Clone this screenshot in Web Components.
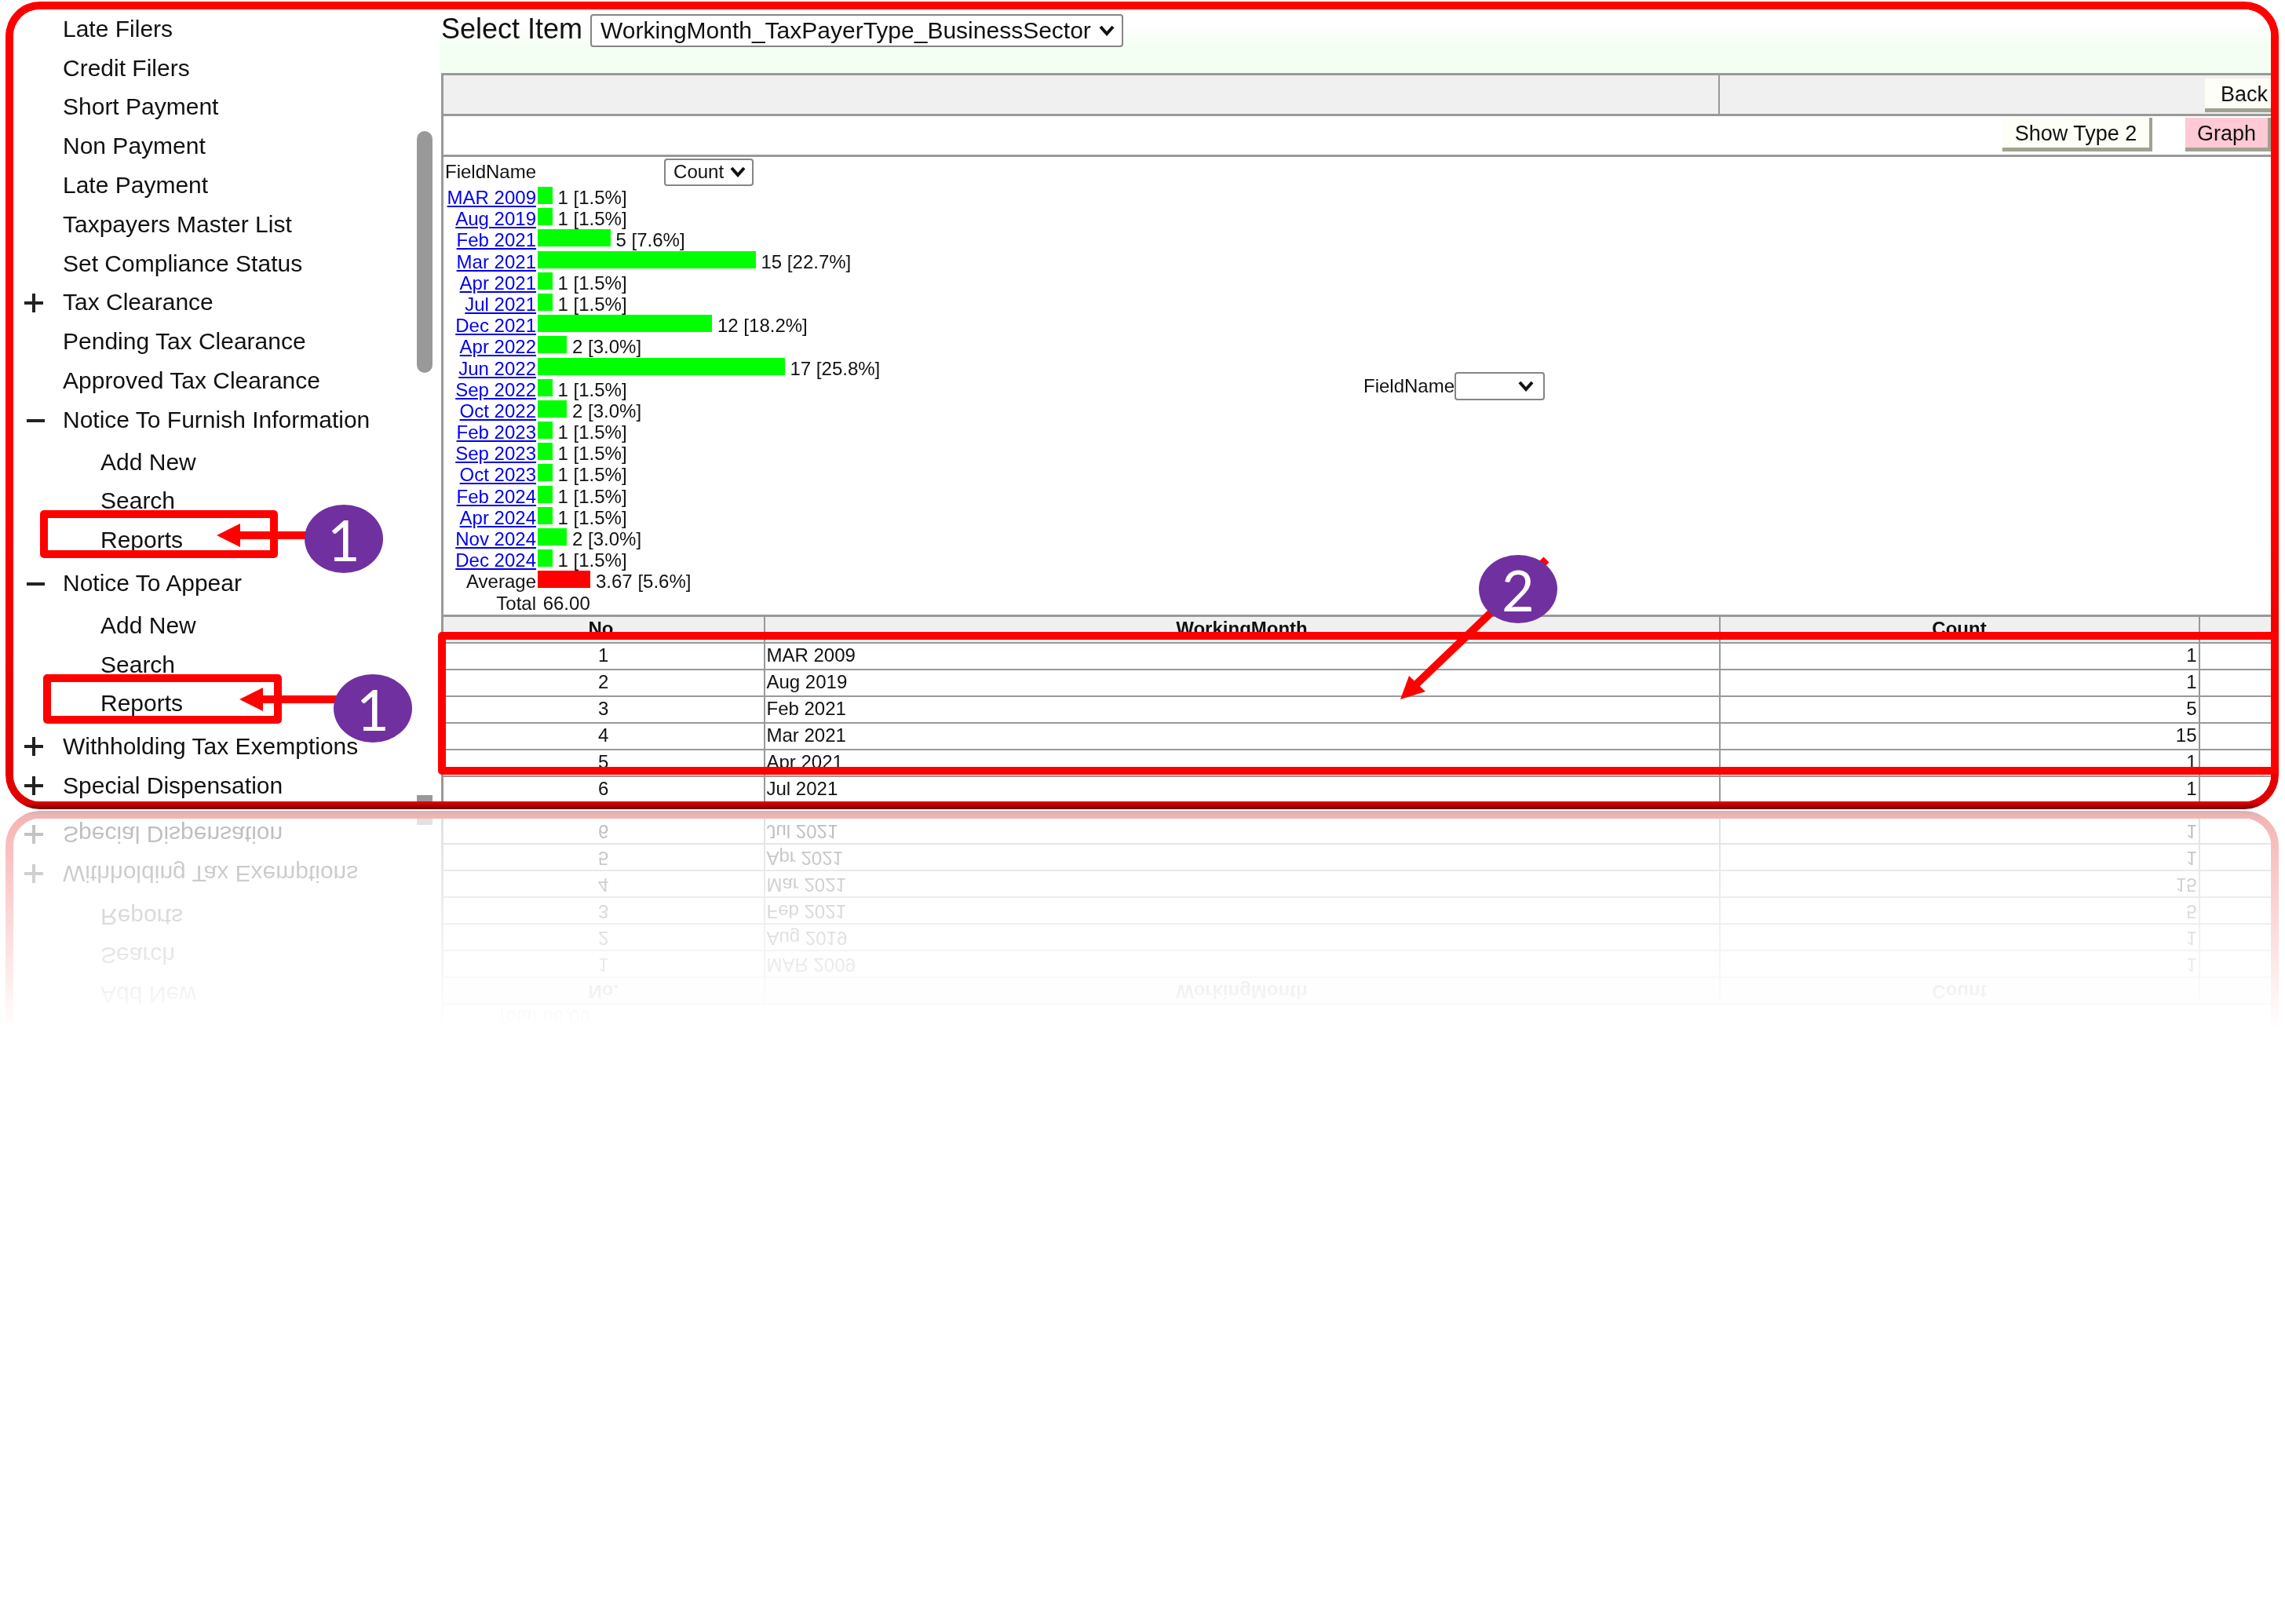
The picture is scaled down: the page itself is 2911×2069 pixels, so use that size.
<!DOCTYPE html>
<html>
<head>
<meta charset="utf-8">
<title>Compliance report</title>
<style>
html, body { margin: 0; background: #fff; }
body { font-family: "Liberation Sans", Arial, sans-serif; color: #111; }
#page { position: relative; width: 2911px; height: 2069px; overflow: hidden; padding-top: 2px; box-sizing: border-box; }
</style>
</head>
<body>
<div id="page">
  <screen-frame>
    <side-nav slot="nav">
      <nav-item>Late Filers</nav-item>
      <nav-item>Credit Filers</nav-item>
      <nav-item>Short Payment</nav-item>
      <nav-item>Non Payment</nav-item>
      <nav-item>Late Payment</nav-item>
      <nav-item>Taxpayers Master List</nav-item>
      <nav-item>Set Compliance Status</nav-item>
      <nav-item icon="plus">Tax Clearance</nav-item>
      <nav-item>Pending Tax Clearance</nav-item>
      <nav-item>Approved Tax Clearance</nav-item>
      <nav-item icon="minus">Notice To Furnish Information</nav-item>
      <nav-item sub first>Add New</nav-item>
      <nav-item sub>Search</nav-item>
      <nav-item sub last>Reports</nav-item>
      <nav-item icon="minus">Notice To Appear</nav-item>
      <nav-item sub first>Add New</nav-item>
      <nav-item sub>Search</nav-item>
      <nav-item sub last>Reports</nav-item>
      <nav-item icon="plus">Withholding Tax Exemptions</nav-item>
      <nav-item icon="plus">Special Dispensation</nav-item>
    </side-nav>
    <report-pane slot="main"></report-pane>
  </screen-frame>

  <call-box style="left:51px;top:650px;width:303px;height:61px"></call-box>
  <call-box style="left:55px;top:859px;width:304px;height:63px"></call-box>
  <call-box style="left:558px;top:805px;width:2345px;height:182px"></call-box>
  <call-arrows></call-arrows>
  <call-badge style="left:388px;top:643px">1</call-badge>
  <call-badge style="left:425px;top:859px">1</call-badge>
  <call-badge style="left:1884px;top:707px">2</call-badge>
</div>

<script>
const frameTemplate = document.createElement('template')
frameTemplate.innerHTML = `
<style>
:host {
  display: block;
  box-sizing: border-box;
  width: 2896px;
  height: 1029px;
  margin-left: 7px;
  border: 10px solid transparent;
  border-radius: 44px;
  background: linear-gradient(#fff, #fff) padding-box,
              linear-gradient(#ff0000 0, #ff0000 60%, #e60000 97%, #dc0000 99.2%, #700000 100%) border-box;
  -webkit-box-reflect: below 2px linear-gradient(transparent 73%, rgba(255,255,255,.3) 100%);
}
#screen {
  display: flex;
  height: 100%;
  border-radius: 34px;
  overflow: hidden;
  box-shadow: inset 0 -3px 4px rgba(0,0,0,.18);
  filter: blur(.45px);
}
</style>
<div id="screen">
  <slot name="nav"></slot>
  <slot name="main"></slot>
</div>`

class ScreenFrame extends HTMLElement {
  constructor () {
    super()
    this.attachShadow({ mode: 'open' })
    this.shadowRoot.appendChild(frameTemplate.content.cloneNode(true))
  }
}
customElements.define('screen-frame', ScreenFrame)

const navTemplate = document.createElement('template')
navTemplate.innerHTML = `
<style>
:host {
  display: flex;
  flex: 0 0 543px;
  width: 543px;
  height: 100%;
  overflow: hidden;
  background: #fff;
}
#items { flex: 0 0 514px; }
#track { display: flex; flex-direction: column; width: 20px; }
#thumb { width: 20px; height: 308px; margin-top: 155px; border-radius: 10px; background: #999; }
#end { width: 20px; height: 8px; margin-top: auto; background: #999; }
</style>
<div id="items"><slot></slot></div>
<div id="track"><div id="thumb"></div><div id="end"></div></div>`

class SideNav extends HTMLElement {
  constructor () {
    super()
    this.attachShadow({ mode: 'open' })
    this.shadowRoot.appendChild(navTemplate.content.cloneNode(true))
  }
}
customElements.define('side-nav', SideNav)

const itemTemplate = document.createElement('template')
itemTemplate.innerHTML = `
<style>
:host {
  display: flex;
  align-items: center;
  height: 49.8px;
  padding-left: 63px;
  font-size: 30px;
  white-space: nowrap;
  position: relative;
}
:host([sub]) { padding-left: 111px; }
:host([first]) { margin-top: 4px; }
:host([last]) { margin-bottom: 5px; }
svg { position: absolute; left: 13px; top: 12px; width: 28px; height: 26px; }
</style>
<svg viewBox="0 0 28 26"></svg>
<slot></slot>`

class NavItem extends HTMLElement {
  constructor () {
    super()
    this.attachShadow({ mode: 'open' })
    this.shadowRoot.appendChild(itemTemplate.content.cloneNode(true))
  }

  connectedCallback () {
    const svg = this.shadowRoot.querySelector('svg')
    const icon = this.getAttribute('icon')
    if (icon === 'plus') {
      svg.innerHTML = '<path d="M1 13H25M13 1V25" stroke="#222" stroke-width="4"/>'
    } else if (icon === 'minus') {
      svg.innerHTML = '<path d="M4 14H27" stroke="#222" stroke-width="4"/>'
    } else {
      svg.remove()
    }
  }
}
customElements.define('nav-item', NavItem)

const dropTemplate = document.createElement('template')
dropTemplate.innerHTML = `
<style>
:host {
  display: inline-flex;
  align-items: center;
  box-sizing: border-box;
  justify-content: space-between;
  border: 2px solid #858585;
  border-radius: 4px;
  background: #fff;
  white-space: nowrap;
}
svg { width: 20px; height: 14px; flex: none; }
</style>
<span><slot></slot></span>
<svg viewBox="0 0 20 14"><path d="M2 2L10 11L18 2" fill="none" stroke="#111" stroke-width="4"/></svg>`

class DropDown extends HTMLElement {
  constructor () {
    super()
    this.attachShadow({ mode: 'open' })
    this.shadowRoot.appendChild(dropTemplate.content.cloneNode(true))
  }
}
customElements.define('drop-down', DropDown)

const btnTemplate = document.createElement('template')
btnTemplate.innerHTML = `
<style>
:host {
  display: inline-flex;
  align-items: center;
  justify-content: center;
  box-sizing: border-box;
  height: 43px;
  padding-top: 2px;
  font-size: 27px;
  background: #fdfff6;
  border-right: 4px solid #a0a192;
  border-bottom: 5px solid #a0a192;
  white-space: nowrap;
}
:host([pink]) { background: #ffc9d6; }
</style>
<slot></slot>`

class FlatButton extends HTMLElement {
  constructor () {
    super()
    this.attachShadow({ mode: 'open' })
    this.shadowRoot.appendChild(btnTemplate.content.cloneNode(true))
  }
}
customElements.define('flat-button', FlatButton)

const chartTemplate = document.createElement('template')
chartTemplate.innerHTML = `
<style>
:host {
  display: flex;
  height: 583px;
  border-top: 3px solid #999;
  border-left: 3px solid #999;
  margin-left: 2px;
  font-size: 24px;
  background: #fff;
}
#left { flex: 0 0 1172px; }
#head { display: flex; align-items: center; height: 38px; padding-left: 2px; }
#head drop-down { width: 114px; height: 35px; margin-left: 163px; padding: 0 8px 0 10px; }
.row { display: grid; grid-template-columns: 118px 1fr; height: 27.2px; line-height: 27.2px; white-space: nowrap; }
.label { text-align: right; }
a { color: #0000ee; text-decoration: underline; }
.val { display: flex; padding-left: 2px; }
.bar { height: 22px; margin-top: 0; margin-right: 7px; background: #00ff00; }
.bar.avg { background: #ff0000; }
#pick { display: flex; align-items: center; }
#pick drop-down { width: 115px; height: 36px; padding-right: 12px; justify-content: flex-end; }
</style>
<div id="left">
  <div id="head">FieldName<drop-down>Count</drop-down></div>
  <div id="rows"></div>
</div>
<div id="pick">FieldName<drop-down></drop-down></div>`

const months = [
  ['MAR 2009', 1, '1.5'], ['Aug 2019', 1, '1.5'], ['Feb 2021', 5, '7.6'], ['Mar 2021', 15, '22.7'],
  ['Apr 2021', 1, '1.5'], ['Jul 2021', 1, '1.5'], ['Dec 2021', 12, '18.2'], ['Apr 2022', 2, '3.0'],
  ['Jun 2022', 17, '25.8'], ['Sep 2022', 1, '1.5'], ['Oct 2022', 2, '3.0'], ['Feb 2023', 1, '1.5'],
  ['Sep 2023', 1, '1.5'], ['Oct 2023', 1, '1.5'], ['Feb 2024', 1, '1.5'], ['Apr 2024', 1, '1.5'],
  ['Nov 2024', 2, '3.0'], ['Dec 2024', 1, '1.5']
]

class BarChart extends HTMLElement {
  constructor () {
    super()
    this.attachShadow({ mode: 'open' })
    this.shadowRoot.appendChild(chartTemplate.content.cloneNode(true))
  }

  connectedCallback () {
    let html = ''
    months.forEach(([name, count, pct]) => {
      html += `<div class="row"><div class="label"><a href="#">${name}</a></div>` +
        `<div class="val"><div class="bar" style="width:${count * 18.5}px"></div>${count} [${pct}%]</div></div>`
    })
    html += '<div class="row"><div class="label">Average</div><div class="val"><div class="bar avg" style="width:67px"></div>3.67 [5.6%]</div></div>'
    html += '<div class="row"><div class="label">Total</div><div class="val">&nbsp;66.00</div></div>'
    this.shadowRoot.querySelector('#rows').innerHTML = html
  }
}
customElements.define('bar-chart', BarChart)

const tableTemplate = document.createElement('template')
tableTemplate.innerHTML = `
<style>
:host { display: block; margin-left: 2px; font-size: 24px; background: #fff; }
table { border-collapse: collapse; table-layout: fixed; width: 2331px; }
th, td { height: 30px; padding: 0 2px 2px; border: 2px solid #999; line-height: 30px; white-space: nowrap; overflow: hidden; }
tr > :first-child { border-left: 3px solid #999; }
tr > :last-child { border-right: 0; }
tr:first-child > * { border-top: 3px solid #999; }
th { background: #f0f0f0; font-weight: bold; }
.c { text-align: center; }
.r { text-align: right; }
</style>
<table>
  <colgroup><col style="width:410px"><col style="width:1217px"><col style="width:611px"><col></colgroup>
  <tbody id="body"><tr><th>No.</th><th>WorkingMonth</th><th>Count</th><th></th></tr></tbody>
</table>`

class DataTable extends HTMLElement {
  constructor () {
    super()
    this.attachShadow({ mode: 'open' })
    this.shadowRoot.appendChild(tableTemplate.content.cloneNode(true))
  }

  connectedCallback () {
    const body = this.shadowRoot.querySelector('#body')
    months.slice(0, 6).forEach(([name, count], i) => {
      const tr = document.createElement('tr')
      tr.innerHTML = `<td class="c">${i + 1}</td><td>${name}</td><td class="r">${count}</td><td></td>`
      body.appendChild(tr)
    })
  }
}
customElements.define('data-table', DataTable)

const paneTemplate = document.createElement('template')
paneTemplate.innerHTML = `
<style>
:host { display: block; flex: 1; min-width: 0; height: 100%; overflow: hidden; background: #fff; }
#select {
  display: flex;
  align-items: flex-start;
  gap: 10px;
  height: 81px;
  box-sizing: border-box;
  padding: 4px 0 0 2px;
  font-size: 36px;
  background: linear-gradient(#fff 18px, #f3fff3 60%);
  white-space: nowrap;
}
#select drop-down { width: 679px; height: 42px; margin-top: 2px; padding: 0 9px 0 11px; font-size: 30px; }
.bar { display: flex; height: 52px; box-sizing: border-box; margin-left: 2px; border-top: 3px solid #999; border-left: 3px solid #999; justify-content: flex-end; }
#one { background: #f0f0f0; }
#one .split { width: 702px; border-left: 2px solid #999; display: flex; justify-content: flex-end; padding-top: 4px; }
#one flat-button { width: 84px; border-right: 0; justify-content: flex-end; padding-right: 4px; height: 43px; }
#two { padding-top: 2px; gap: 42px; }
#two flat-button:first-child { width: 191px; }
#two flat-button:last-child { width: 109px; }
</style>
<div id="select">Select Item <drop-down>WorkingMonth_TaxPayerType_BusinessSector</drop-down></div>
<div class="bar" id="one"><div class="split"><flat-button>Back</flat-button></div></div>
<div class="bar" id="two"><flat-button>Show Type 2</flat-button><flat-button pink>Graph</flat-button></div>
<bar-chart></bar-chart>
<data-table></data-table>`

class ReportPane extends HTMLElement {
  constructor () {
    super()
    this.attachShadow({ mode: 'open' })
    this.shadowRoot.appendChild(paneTemplate.content.cloneNode(true))
  }
}
customElements.define('report-pane', ReportPane)

// annotations drawn on top of the screenshot
class CallBox extends HTMLElement {
  constructor () {
    super()
    this.attachShadow({ mode: 'open' }).innerHTML = `
    <style>:host { position: absolute; box-sizing: border-box; border: 10px solid #ff0000; border-radius: 5px; }</style>`
  }
}
customElements.define('call-box', CallBox)

class CallBadge extends HTMLElement {
  constructor () {
    super()
    this.attachShadow({ mode: 'open' }).innerHTML = `
    <style>
    :host {
      position: absolute;
      display: flex;
      align-items: center;
      justify-content: center;
      width: 100px;
      height: 87px;
      border-radius: 50%;
      background: #7030a0;
      color: #fff;
      font: 72px Lato, "Open Sans", sans-serif;
    }
    </style><slot></slot>`
  }
}
customElements.define('call-badge', CallBadge)

class CallArrows extends HTMLElement {
  constructor () {
    super()
    this.attachShadow({ mode: 'open' }).innerHTML = `
    <style>:host { position: absolute; left: 0; top: 0; }</style>
    <svg width="2911" height="2069" viewBox="0 0 2911 2069" style="display:block">
      <path d="M300 682H395" stroke="#f00" stroke-width="10"/>
      <path d="M276 682L306 667V697Z" fill="#f00"/>
      <path d="M330 891H430" stroke="#f00" stroke-width="10"/>
      <path d="M305 891L335 876V906Z" fill="#f00"/>
      <path d="M1970 713L1804 872" stroke="#f00" stroke-width="10"/>
      <path d="M1784 891L1795 861L1816 881Z" fill="#f00"/>
    </svg>`
  }
}
customElements.define('call-arrows', CallArrows)
</script>
</body>
</html>
